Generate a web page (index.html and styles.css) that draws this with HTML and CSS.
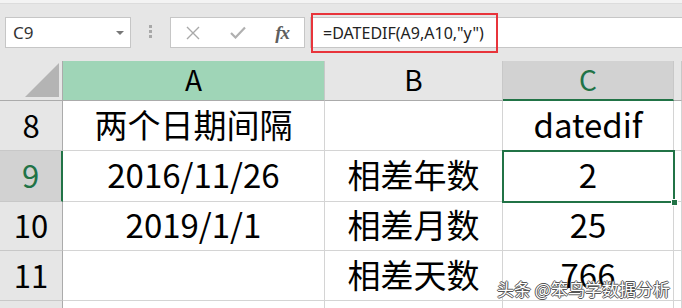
FILE: index.html
```html
<!DOCTYPE html>
<html lang="zh-CN">
<head>
  <meta charset="UTF-8">
  <title>DATEDIF</title>
  <link rel="stylesheet" href="styles.css">
</head>
<body>
  <div class="app">
    <div class="topstrip"></div>
    <!-- Formula bar -->
    <div class="toolbar">
      <div class="namebox">
        <span>C9</span>
        <svg class="caret" width="8" height="4" viewBox="0 0 8 4"><path d="M0 0H8L4 4Z" fill="#777"/></svg>
      </div>
      <div class="grip"><i></i><i></i><i></i></div>
      <div class="fxbox">
        <svg width="14" height="14" viewBox="0 0 14 14"><path d="M1 1L13 13M13 1L1 13" stroke="#a9a9a9" stroke-width="1.4" fill="none"/></svg>
        <svg width="16" height="13" viewBox="0 0 16 13"><path d="M1 7L5.5 11.5L15 1.5" stroke="#b0b0b0" stroke-width="2.2" fill="none"/></svg>
        <span class="fx">fx</span>
      </div>
      <div class="formula">
        <span class="formula-text">=DATEDIF(A9,A10,"y")</span>
        <span class="mark"></span>
      </div>
    </div>
    <!-- Sheet -->
    <div class="sheet">
      <div class="corner"><svg width="34" height="34" viewBox="0 0 34 34"><path d="M34 0V34H0Z" fill="#b4b4b4"/></svg></div>
      <div class="col-head ref">A</div>
      <div class="col-head">B</div>
      <div class="col-head active">C</div>
      <div class="col-head"></div>

      <div class="row-head">8</div>
      <div class="cell">两个日期间隔</div>
      <div class="cell"></div>
      <div class="cell">datedif</div>
      <div class="cell"></div>

      <div class="row-head active">9</div>
      <div class="cell">2016/11/26</div>
      <div class="cell">相差年数</div>
      <div class="cell selected">2<span class="handle"></span></div>
      <div class="cell"></div>

      <div class="row-head">10</div>
      <div class="cell">2019/1/1</div>
      <div class="cell">相差月数</div>
      <div class="cell">25</div>
      <div class="cell"></div>

      <div class="row-head">11</div>
      <div class="cell"></div>
      <div class="cell">相差天数</div>
      <div class="cell">766</div>
      <div class="cell"></div>

      <div class="row-head"></div>
      <div class="cell"></div>
      <div class="cell"></div>
      <div class="cell"></div>
      <div class="cell"></div>
    </div>
    <div class="watermark">头条 @笨鸟学数据分析</div>
  </div>
</body>
</html>
```
FILE: styles.css
```css
* { margin: 0; padding: 0; box-sizing: border-box; }
body {
  background: #fff;
  font-family: "Noto Sans CJK SC", "Noto Sans", sans-serif;
  color: #000;
}
.app {
  position: relative;
  width: 682px;
  height: 308px;
  overflow: hidden;
}
.topstrip {
  height: 4px;
  background: #f3f3f3;
  border-bottom: 1px solid #dcdcdc;
}
/* Formula bar */
.toolbar {
  height: 57px;
  background: #e6e6e6;
  display: flex;
  align-items: flex-start;
  padding: 13px 0 0 5px;
}
.namebox, .fxbox, .formula {
  height: 31px;
  background: #fff;
  border: 1px solid #c6c6c6;
  display: flex;
  align-items: center;
}
.namebox {
  width: 126px;
  padding: 0 6px 0 7px;
  justify-content: space-between;
  font-family: "Noto Sans", sans-serif;
  font-size: 17px;
  color: #333;
}
.grip {
  width: 3px;
  margin: 8px 18px 0 18px;
  display: flex;
  flex-direction: column;
  gap: 2px;
}
.grip i { display: block; width: 3px; height: 3px; background: #a8a8a8; }
.fxbox {
  width: 135px;
  justify-content: space-around;
}
.fx {
  font-family: "Liberation Serif", serif;
  font-style: italic;
  font-weight: bold;
  font-size: 19px;
  color: #5e5e5e;
  letter-spacing: -1px;
}
.formula {
  position: relative;
  flex: 1;
  margin-left: 5px;
  border-right: none;
  padding-left: 12px;
  font-family: "Noto Sans", sans-serif;
  font-size: 16px;
  color: #222;
}
.formula .mark {
  position: absolute;
  left: 0;
  top: -5px;
  width: 187px;
  height: 40px;
  border: 2px solid #e8343b;
}
/* Sheet grid */
.sheet {
  display: grid;
  grid-template-columns: 63px 262px 178px 171px 8px;
  grid-template-rows: 40px 50px 51px 49px 50px 8px;
}
.corner {
  background: #e6e6e6;
  border-right: 1px solid #ababab;
  border-bottom: 1px solid #ababab;
  display: flex;
  justify-content: flex-end;
  align-items: flex-end;
  padding: 0 3px 3px 0;
}
.col-head, .row-head, .cell {
  display: flex;
  align-items: center;
  justify-content: center;
  line-height: 1;
}
.col-head {
  background: #e6e6e6;
  border-right: 1px solid #c8c8c8;
  border-bottom: 1px solid #ababab;
  font-size: 28px;
  padding-bottom: 3px;
}
.col-head.ref { background: #9fd5b7; }
.col-head.active {
  background: #d2d2d2;
  color: #217346;
  border-bottom: 2px solid #217346;
}
.row-head {
  background: #e6e6e6;
  border-right: 1px solid #ababab;
  border-bottom: 1px solid #c8c8c8;
  font-size: 31px;
  padding-bottom: 3px;
}
.row-head.active {
  background: #d2d2d2;
  color: #217346;
  border-right: 2px solid #217346;
}
.cell {
  border-right: 1px solid #d4d4d4;
  border-bottom: 1px solid #d4d4d4;
  font-size: 33px;
  padding-bottom: 3px;
}
.cell.selected {
  position: relative;
  outline: 2px solid #217346;
  outline-offset: -1px;
}
.handle {
  position: absolute;
  right: -5px;
  bottom: -5px;
  width: 7px;
  height: 7px;
  background: #217346;
  border: 1px solid #fff;
}
.watermark {
  position: absolute;
  left: 497px;
  top: 279px;
  font-size: 17px;
  line-height: 20px;
  color: #fff;
  white-space: nowrap;
  text-shadow: 1px 0 0 #555, -1px 0 0 #555, 0 1px 0 #555, 0 -1px 0 #555;
}
```
